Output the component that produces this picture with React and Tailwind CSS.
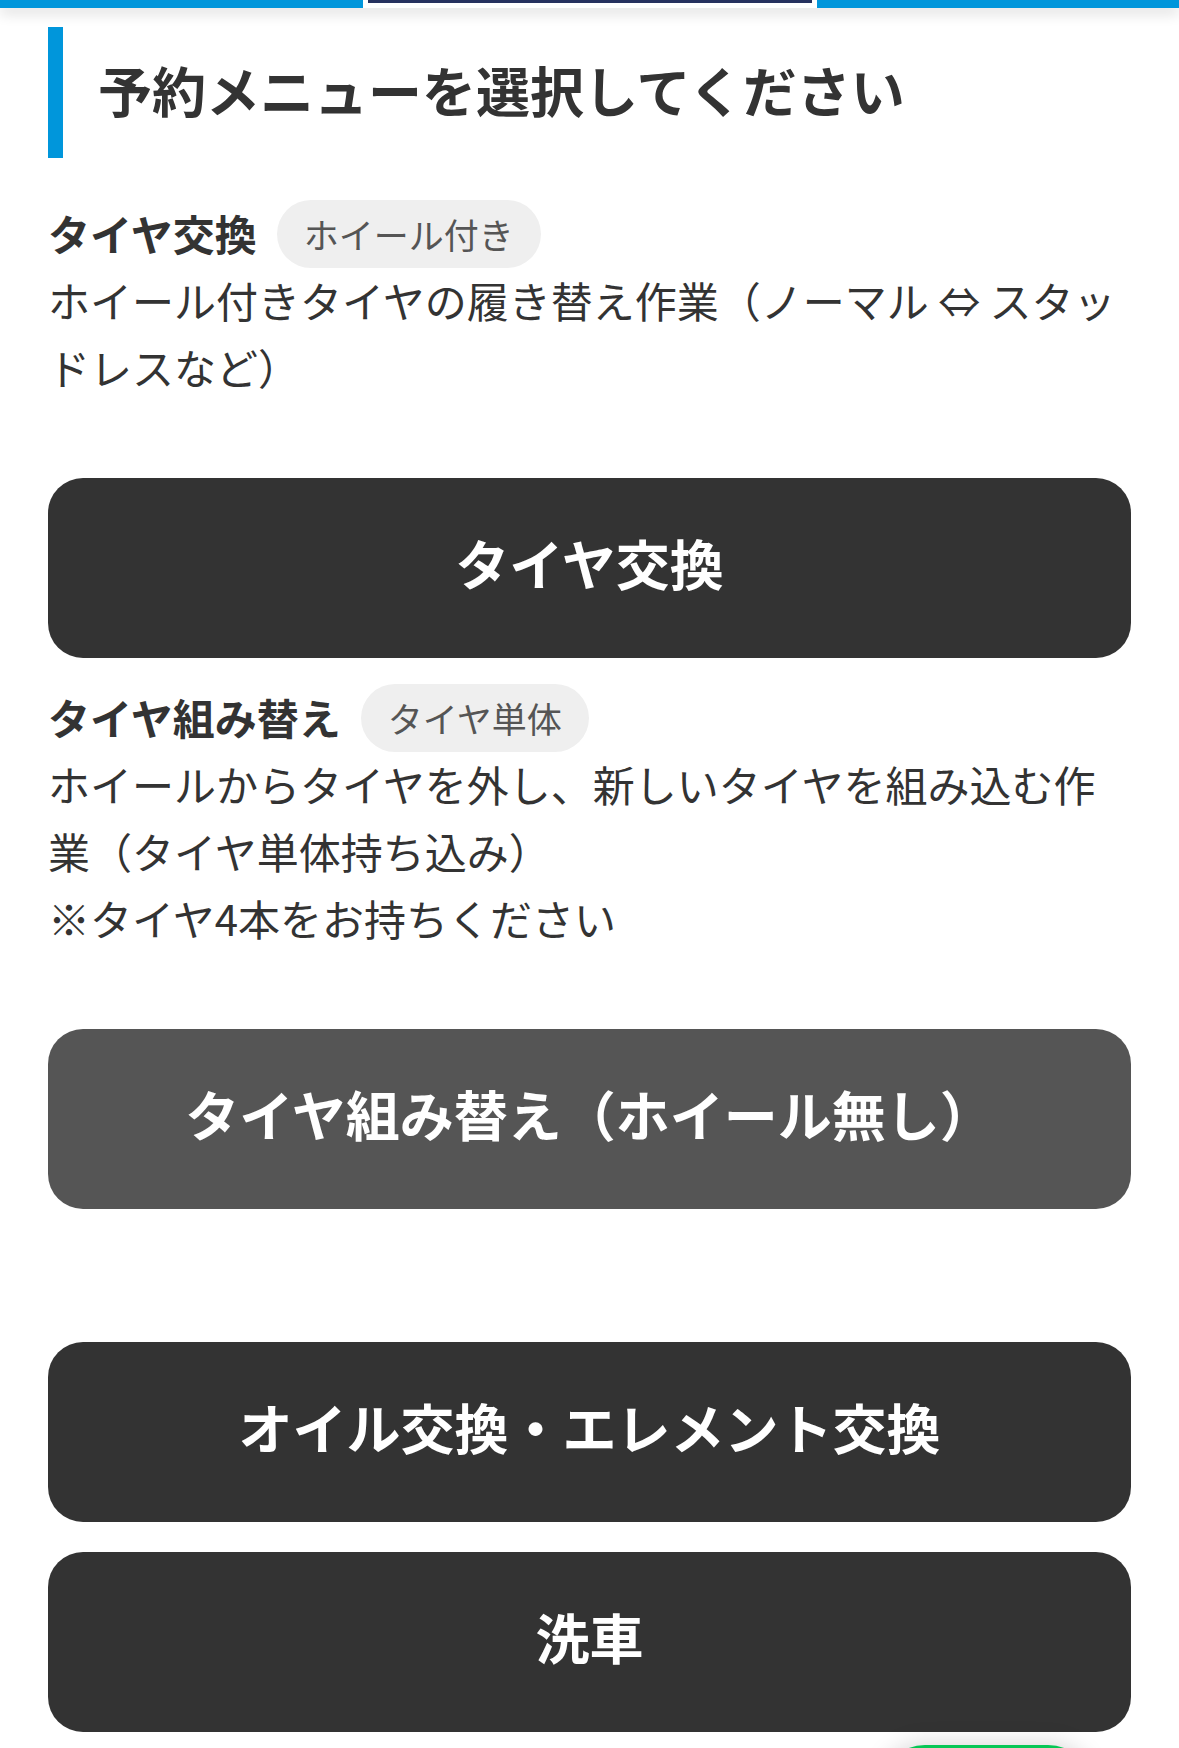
import React from "react"

const FONT = { fontFamily: '"Noto Sans CJK JP", "Noto Sans", sans-serif' }

const menus = [
  {
    label: "タイヤ交換",
    tag: "ホイール付き",
    desc: ["ホイール付きタイヤの履き替え作業（ノーマル ⇔ スタッドレスなど）"],
    button: "タイヤ交換",
    tone: "bg-[#333333]",
  },
  {
    label: "タイヤ組み替え",
    tag: "タイヤ単体",
    desc: [
      "ホイールからタイヤを外し、新しいタイヤを組み込む作業（タイヤ単体持ち込み）",
      "※タイヤ4本をお持ちください",
    ],
    button: "タイヤ組み替え（ホイール無し）",
    tone: "bg-[#555555]",
  },
]

const MenuButton = ({ label, tone = "bg-[#333333]", className = "" }) => (
  <button
    className={`w-full h-[180px] rounded-[35px] ${tone} pb-[11px] text-white text-[54px] font-bold leading-none ${className}`}
  >
    {label}
  </button>
)

const App = () => {
  return (
    <div className="relative h-[1748px] overflow-hidden bg-white text-[#333333]" style={FONT}>
      {/* top tabs */}
      <div className="relative z-10 flex h-2 shadow-[0_5px_14px_rgba(0,0,0,0.16)]">
        <div className="flex-1 bg-[#0096db]" />
        <div className="w-[454px] bg-white px-[5px]">
          <div className="h-[3px] bg-[#26325f]" />
        </div>
        <div className="flex-1 bg-[#0096db]" />
      </div>

      <main className="px-[48px]">
        <h1 className="mt-[19px] flex h-[131px] items-center border-l-[15px] border-[#0096db] pb-[6px] pl-[35px] text-[54px] font-bold leading-none">
          予約メニューを選択してください
        </h1>

        {menus.map((m, i) => (
          <section key={m.label} className={i === 0 ? "mt-[42px]" : "mt-[26px]"}>
            <div className="flex items-center gap-[20px]">
              <span className="pb-[3px] text-[42px] font-bold leading-none">{m.label}</span>
              <span className="flex h-[68px] items-center rounded-full bg-[#efefef] px-[27px] pb-[2px] text-[35px] leading-none text-[#555555]">
                {m.tag}
              </span>
            </div>
            <div className="-mt-[2px] text-[42px] leading-[67px]">
              {m.desc.map((d) => (
                <p key={d}>{d}</p>
              ))}
            </div>
            <MenuButton label={m.button} tone={m.tone} className="mt-[78px]" />
          </section>
        ))}

        <MenuButton label="オイル交換・エレメント交換" className="mt-[133px]" />
        <MenuButton label="洗車" className="mt-[30px]" />
      </main>

      {/* floating button peeking at the bottom */}
      <div className="absolute left-[880px] top-[1745px] h-[90px] w-[213px] rounded-full bg-[#06c755] shadow-[0_0_24px_rgba(0,0,0,0.18)]" />
    </div>
  )
}

export default App
